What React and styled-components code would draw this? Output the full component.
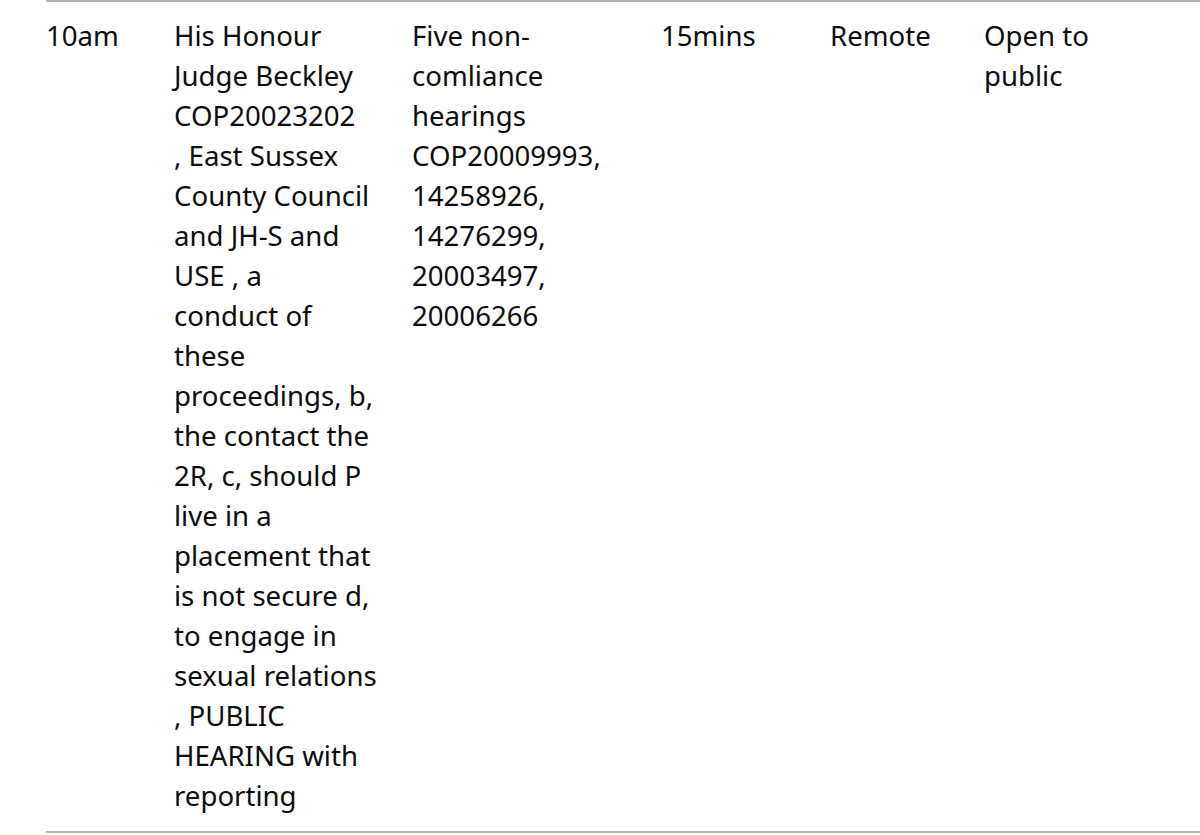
import React from "react";
import styled, { createGlobalStyle } from "styled-components";

const GlobalStyle = createGlobalStyle`
  html, body {
    margin: 0;
    padding: 0;
    background: #ffffff;
  }
  body {
    font-family: "Noto Sans", "Liberation Sans", sans-serif;
    color: #0b0c0c;
  }
`;

const Page = styled.div`
  padding-left: 46px;
  overflow: hidden;
  width: 1200px;
  box-sizing: border-box;
`;

const Table = styled.table`
  border-collapse: collapse;
  width: 1154px;
  table-layout: fixed;
`;

const Row = styled.tr`
  border-top: 2px solid #b1b4b6;
  border-bottom: 2px solid #b1b4b6;
`;

const Cell = styled.td`
  width: ${({ w }) => (w ? `${w}px` : "auto")};
  vertical-align: top;
  padding: 13px 0 16px 0;
  font-size: 27.6px;
  line-height: 40px;
`;

const Line = styled.span`
  display: block;
  white-space: nowrap;
`;

const cols = [
  { w: 128, lines: ["10am"] },
  {
    w: 238,
    lines: [
      "His Honour",
      "Judge Beckley",
      "COP20023202",
      ", East Sussex",
      "County Council",
      "and JH-S and",
      "USE , a",
      "conduct of",
      "these",
      "proceedings, b,",
      "the contact the",
      "2R, c, should P",
      "live in a",
      "placement that",
      "is not secure d,",
      "to engage in",
      "sexual relations",
      ", PUBLIC",
      "HEARING with",
      "reporting"
    ]
  },
  {
    w: 249,
    lines: [
      "Five non-",
      "comliance",
      "hearings",
      "COP20009993,",
      "14258926,",
      "14276299,",
      "20003497,",
      "20006266"
    ]
  },
  { w: 169, lines: ["15mins"] },
  { w: 154, lines: ["Remote"] },
  { lines: ["Open to", "public"] }
];

export default function App() {
  return (
    <Page>
      <GlobalStyle />
      <Table>
        <tbody>
          <Row>
            {cols.map((col, i) => (
              <Cell key={i} w={col.w}>
                {col.lines.map((l, j) => (
                  <Line key={j}>{l}</Line>
                ))}
              </Cell>
            ))}
          </Row>
        </tbody>
      </Table>
    </Page>
  );
}
